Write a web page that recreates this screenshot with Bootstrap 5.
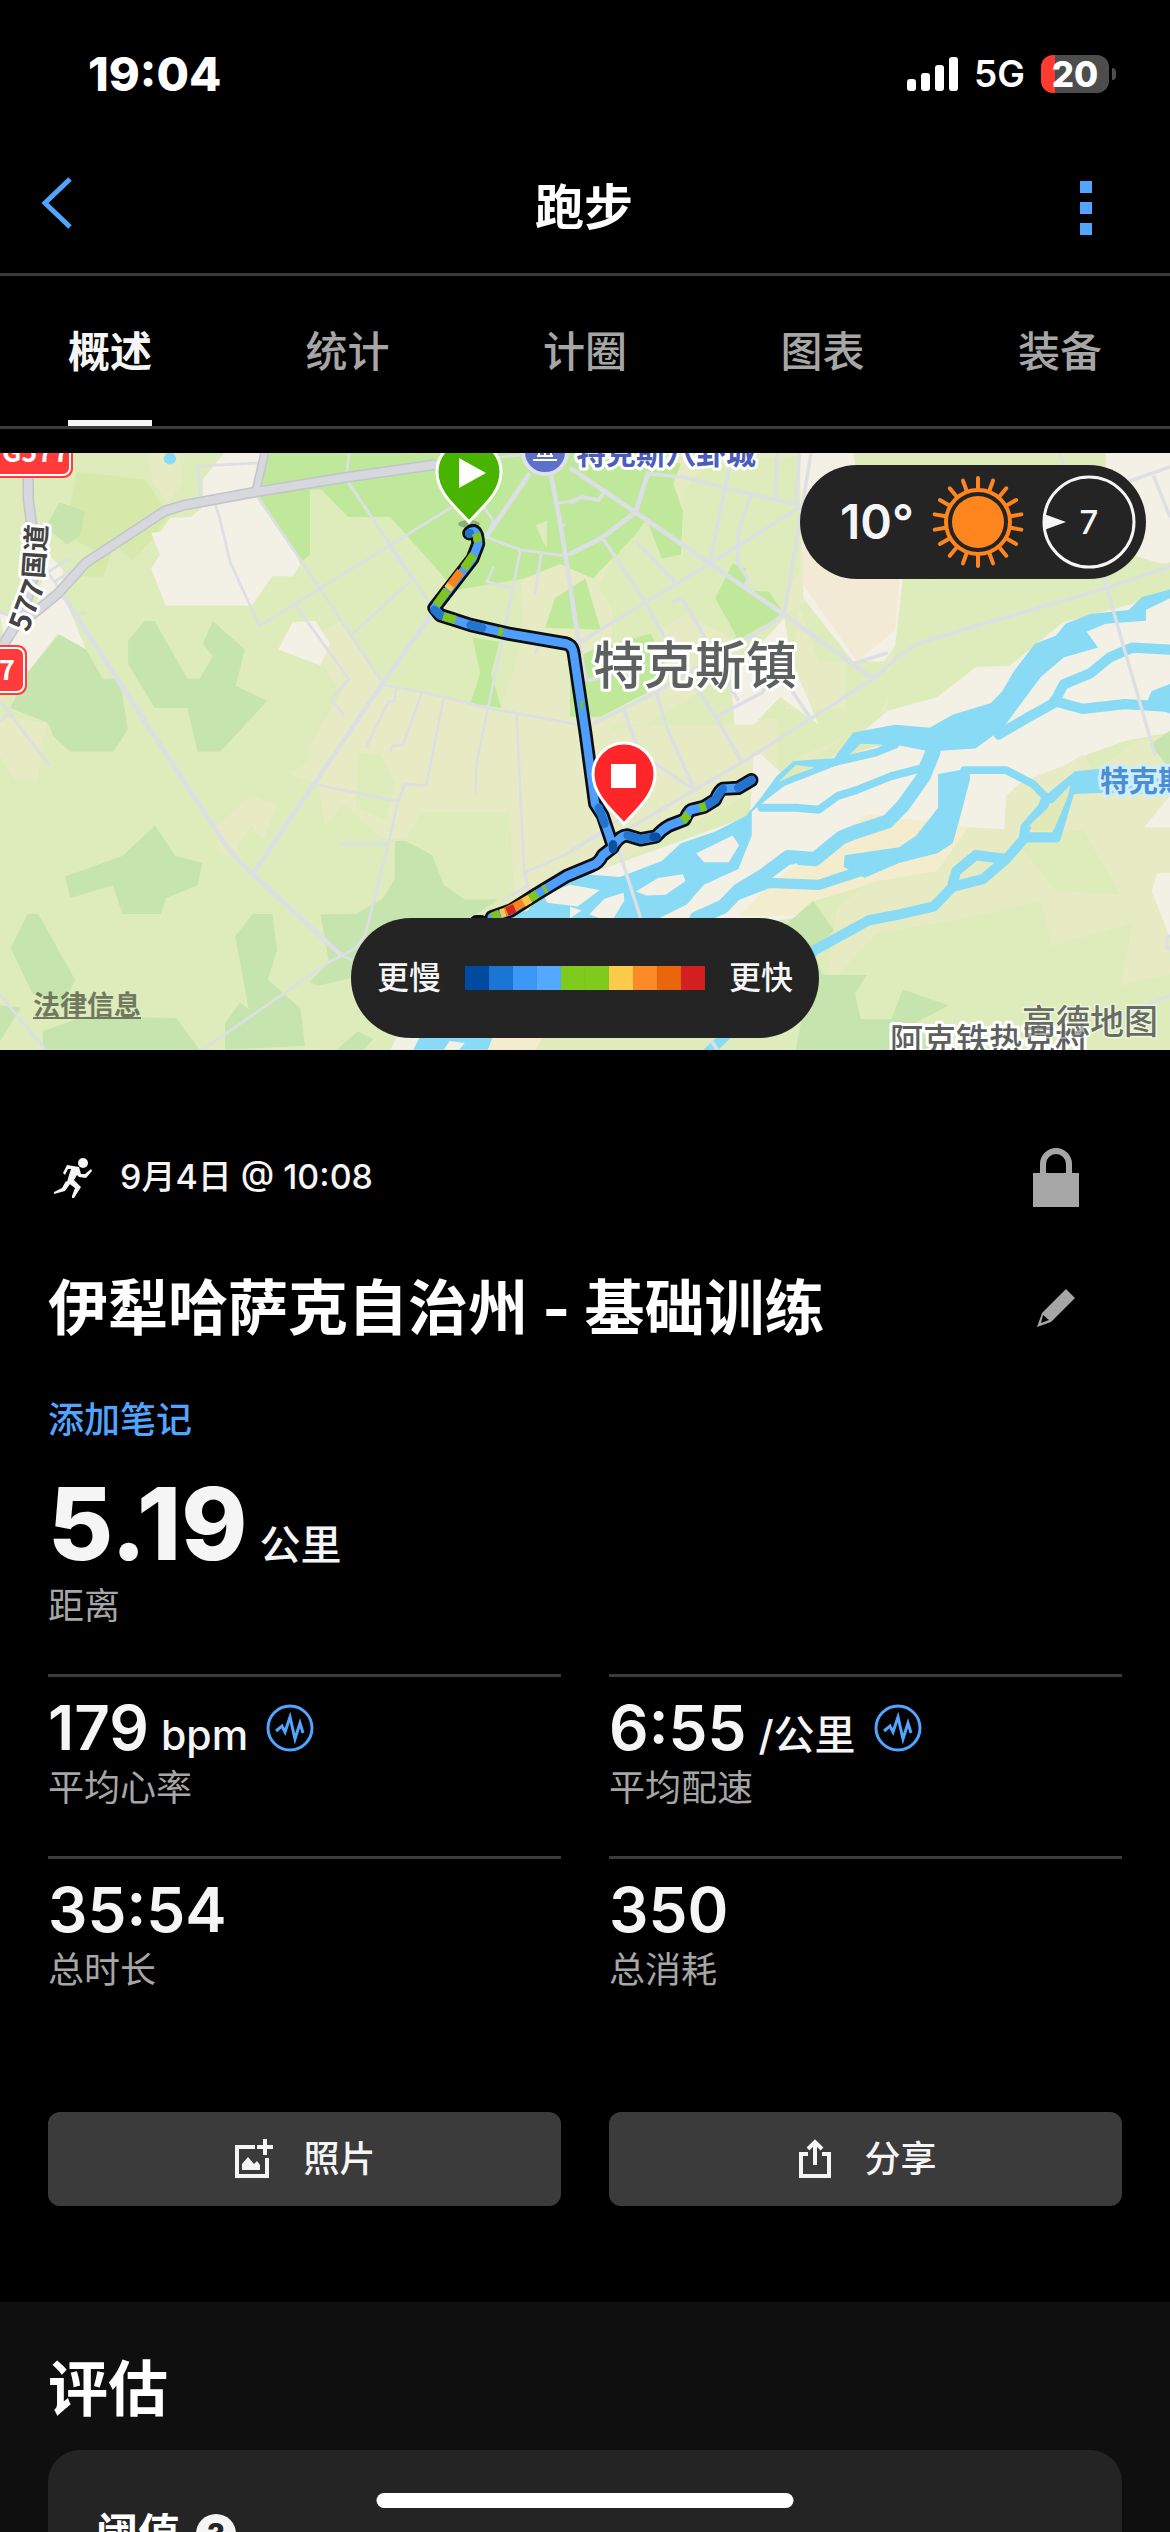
<!DOCTYPE html>
<html lang="zh-CN" data-bs-theme="dark">
<head>
<meta charset="utf-8">
<meta name="viewport" content="width=device-width, initial-scale=1">
<title>跑步</title>
<link href="https://cdn.jsdelivr.net/npm/bootstrap@5.3.0/dist/css/bootstrap.min.css" rel="stylesheet">
<style>
  :root { --ink: #f5f5f5; --dim: #a6a6a6; --accent: #52a5ff; --rule: #3b3b3b; --panel: #242424; }
  body { background: #000; color: var(--ink); font-family: Inter, "Noto Sans CJK SC", sans-serif; font-size: 36px; line-height: 48px; }
  svg { display: block; flex: none; }
  .screen { height: 100vh; }
  .statusbar { height: 142px; padding: 6px 54px 0 88px; color: #fff; }
  .clock { font-size: 47px; font-weight: 800; }
  .network { font-size: 37px; font-weight: 600; }
  .battery { width: 68px; height: 38px; border-radius: 12px; background: linear-gradient(to right, #ff3b30 14px, #4d4d4d 14px); font-size: 35px; line-height: 38px; font-weight: 800; }
  .nub { width: 4px; height: 12px; border-radius: 0 6px 6px 0; background: #4d4d4d; margin-left: 3px; }
  .titlebar { height: 134px; padding: 0 78px 0 40px; border-bottom: 3px solid var(--rule); }
  .titlebar h1 { font-size: 49px; line-height: 60px; font-weight: 700; }
  .plain { background: none; border: 0; padding: 0; color: var(--accent); }
  .back { width: 132px; padding-bottom: 8px; }
  .more { width: 96px; }
  .tabs { padding: 0 68px; height: 153px; border-bottom: 3px solid var(--rule); }
  .tabs a { font-size: 42px; line-height: 60px; color: var(--dim); text-decoration: none; padding-top: 46px; border-bottom: 6px solid transparent; font-weight: 500; }
  .tabs a.active { color: var(--ink); border-color: var(--ink); font-weight: 700; }
  .mapbox { margin-top: 24px; height: 597px; overflow: hidden; background: #deebba; }
  .mapbox > svg { width: 100%; height: 100%; }
  .mapbox text { font-family: "Noto Sans CJK SC", sans-serif; font-weight: 700; }
  .mapbox .town { font-weight: 500; }
  .pill { background: var(--panel); border-radius: 60px; }
  .weather { top: 12px; right: 24px; height: 114px; padding: 0 10px 0 40px; gap: 18px; }
  .temp { font-size: 48px; font-weight: 600; }
  .wind { font-size: 33px; font-weight: 500; width: 94px; height: 94px; }
  .legendbar { bottom: 12px; height: 120px; padding: 0 26px; gap: 24px; font-size: 32px; font-weight: 500; }
  .scale i { width: 24px; height: 24px; }
  .legal { left: 33px; bottom: 26px; font-size: 27px; line-height: 36px; font-weight: 700; color: #70795f; }
  .pad { padding-left: 48px; padding-right: 48px; }
  .when { padding-top: 96px; font-size: 34px; font-weight: 500; gap: 26px; }
  .name { font-size: 60px; line-height: 72px; font-weight: 700; }
  .name-row { margin-top: 64px; }
  .iconbox { width: 132px; }
  .note { margin-top: 52px; color: var(--accent); text-decoration: none; font-weight: 500; }
  .total { padding: 32px 0 44px; }
  .total .dim { margin-top: 10px; }
  .big { font-size: 100px; line-height: 96px; font-weight: 800; }
  .figure { font-size: 62px; line-height: 72px; font-weight: 600; }
  .unit { font-size: 41px; font-weight: 500; margin: 0 18px 0 12px; }
  .dim { color: var(--dim); }
  .stats { column-gap: 48px; display: grid; grid-template-columns: 1fr 1fr; }
  .stat { border-top: 3px solid var(--rule); height: 182px; padding-top: 15px; }
  .actions { margin-top: 74px; }
  .action { background: #3b3b3b; border: 0; border-radius: 12px; color: var(--ink); height: 94px; font-size: 36px; font-weight: 500; gap: 28px; }
  .action:hover { background: #4a4a4a; color: var(--ink); }
  .review { background: #0f0f0f; padding-top: 51px; margin-top: 96px; }
  .panelcard { background: var(--panel); border-radius: 32px 32px 0 0; margin-top: 25px; padding: 56px 48px 0; }
  .panelcard h3 { font-size: 42px; line-height: 56px; font-weight: 700; }
  .help { width: 40px; height: 40px; border-radius: 50%; background: var(--ink); color: var(--panel); font-size: 30px; line-height: 40px; font-weight: 800; }
  .homebar { bottom: 24px; width: 417px; height: 15px; border-radius: 8px; background: #fff; }
</style>
<script src="https://cdn.jsdelivr.net/npm/bootstrap@5.3.0/dist/js/bootstrap.bundle.min.js"></script>
</head>
<body>
<div class="screen d-flex flex-column overflow-hidden position-relative">

  <div class="statusbar d-flex align-items-center flex-shrink-0">
    <span class="clock me-auto">19:04</span>
    <svg width="51" height="34" fill="#fff" aria-hidden="true"><rect y="22" width="9" height="12" rx="3"/><rect x="14" y="16" width="9" height="18" rx="3"/><rect x="28" y="8" width="9" height="26" rx="3"/><rect x="42" width="9" height="34" rx="3"/></svg>
    <span class="network ms-3 me-3">5G</span>
    <span class="battery text-center">20</span><span class="nub"></span>
  </div>

  <header class="titlebar d-flex align-items-center justify-content-between flex-shrink-0">
    <button class="plain back" aria-label="返回"><svg width="34" height="54" fill="none" stroke="currentColor" stroke-width="5"><path d="M30 2 5 26 30 50"/></svg></button>
    <h1 class="m-0">跑步</h1>
    <button class="plain more d-flex justify-content-end" aria-label="更多"><svg width="12" height="54" fill="currentColor"><path d="M0 0h12v12H0zM0 21h12v12H0zM0 42h12v12H0z"/></svg></button>
  </header>

  <nav class="tabs d-flex justify-content-between flex-shrink-0">
    <a href="#" class="active" aria-current="page">概述</a>
    <a href="#">统计</a>
    <a href="#">计圈</a>
    <a href="#">图表</a>
    <a href="#">装备</a>
  </nav>

  <section class="mapbox position-relative flex-shrink-0">
    <svg viewBox="0 0 1170 597" preserveAspectRatio="xMidYMid slice" role="img" aria-label="路线地图">
      <!-- land cover, west half -->
      <g transform="translate(0,-13) scale(.38265,.39541)">
        <path fill="#e7ebc3" d="M810 500 840 560 890 640 810 770 810 810 755 845 830 870 850 975 900 920 1000 1010 1060 1010 1100 940 1330 940 1345 1160 1600 1160 1600 260 1190 380 1000 400zM655 900 725 920 690 1010 655 975 610 1050 575 1050 565 980zM0 700 125 715 110 770 100 862 40 862 0 800zM390 33 470 33 475 110 440 160 400 110z"/>
        <path fill="#deebba" d="M1150 330 1360 350 1370 500 1310 680 1100 640 1000 610 900 470 840 380 810 300 810 125 910 195 1020 195zM935 792 995 795 1032 870 1010 960 930 930z"/>
        <path fill="#d6e9ab" d="M200 80 380 100 440 190 400 250 345 305 300 260 270 345 200 345 250 280 170 240z"/>
        <path fill="#bfe89b" d="M700 33H1620V290L1500 300 1370 350 1190 380 1145 330 1020 195 910 195 840 125 810 125 810 290 780 315 675 145zM1450 400 1530 350 1570 480 1425 475zM1235 500 1305 510 1283 590 1310 678 1230 665 1255 590z"/>
        <path fill="#deebba" d="M1400 215 1440 200 1445 290 1420 260z"/>
        <path fill="#f3f0e5" d="M395 235 420 232 445 197 500 195 540 160 620 140 665 140 780 300 785 315 765 345 712 345 657 419 433 419 395 325 418 290zM530 150 530 100 585 33 690 33 670 130zM765 460 825 458 862 515 838 570 727 530zM0 440 90 440 110 350 120 280 165 330 165 390 225 530 150 490 75 585 20 560z"/>
        <path fill="#c6e4ad" d="M155 492 225 530 268 604 313 604 334 733 296 788 183 788 140 750 125 715 27 678 70 590zM378 458 404 458 490 604 522 604 556 547 530 515 556 458 640 530 616 622 698 660 576 788 516 788 490 678 405 678 335 567 335 508zM405 975 458 1052 529 1070 516 1126 434 1158 420 1199 320 1199 295 1126 184 1158 170 1104 320 1052zM72 1199 100 1199 196 1365 165 1430 85 1400 28 1285zM660 1199 712 1199 724 1290 700 1365 785 1437 797 1532 588 1542 588 1475 628 1422 650 1440 615 1255zM1032 1014 1060 1014 1130 1050 1160 1126 1215 1162 1300 1162 1230 1210 920 1360 830 1380 810 1370 860 1320 838 1200 930 1199 1000 1160 1032 1110zM170 1475 220 1458 460 1462 522 1542 112 1542 112 1495zM155 158 222 180 210 240 175 265 120 220zM0 1430 55 1435 0 1520zM935 1495 975 1515 950 1542 880 1542z"/>
        <path fill="#f3f0e5" d="M1040 1505H1300V1542H1020z"/>
        <path fill="#f3edcd" d="M1290 1505H1420L1400 1542H1280z"/>
        <path fill="#89daf5" d="M1100 1505H1290L1275 1542H1200L1215 1525 1175 1520 1160 1542H1080z"/>
        <ellipse cx="444" cy="47" rx="16" ry="15" fill="#89daf5"/>
      </g>
      <!-- land cover and river, east half -->
      <g transform="translate(570,-13) scale(.38265,.39541)">
        <path fill="#e7ebc3" d="M270 33H640V400L560 440 480 500 400 600 200 720 60 740 0 1040 100 1080 560 850 830 685 860 380 830 560 650 560 600 420 560 700 400 720 0 720 100 600 180 540 260 560 230 480 380 400 290 300 270 200z"/>
        <path fill="#deebba" d="M75 370 115 300 180 235 215 260 230 340 250 310 295 290 295 130 360 60 600 40 600 330 560 390 520 520 420 500 300 440 200 425 110 425zM540 860 600 800 800 720 830 640V560H720V680H540zM490 240H590V330L560 440 490 380z"/>
        <path fill="#bfe89b" d="M425 312 460 325 460 380 520 384 560 440 440 505 380 400zM60 530 210 490 250 560 200 640 80 700 0 700V560zM-60 33H200L290 60 270 110 295 180 290 290 240 300 200 200 170 240 60 350-60 300z"/>
        <path fill="#f3f0e5" d="M600 33H740L800 350 870 350 850 520 820 560 740 560 610 400zM1400 33H1568V320L1400 270zM420 600 560 450 580 560 650 720 550 650 480 720 430 720z"/>
        <path fill="#f2ead5" d="M610 170 860 350 850 480 750 560 605 360z"/>
        <path fill="#deebba" d="M870 370 1568 310V400L1290 460 1150 570 1060 575 960 650 830 685 830 600 860 520z"/>
        <path fill="#f3f0e5" d="M-150 1215 0 1110 100 1080 470 950 480 800 500 795 560 850 690 800 830 685 960 650 1060 575 1150 570 1290 460 1490 410 1568 400V740L1455 760 1340 800 1300 820 1160 880 1135 985 1040 980 960 1100 780 1120 640 1160 600 1205 300 1260-150 1260z"/>
        <path fill="#f3edcd" d="M640 1040 780 945 1050 980 1010 1090 780 1125 640 1165 590 1203H440L540 1110z"/>
        <path fill="#e7ebc3" d="M1135 985 1140 900 1180 865 1300 820 1340 795 1370 840 1480 760 1568 745V1542H1200L1130 1500 900 1542H640L700 1180 780 1120 960 1090 1040 980z"/>
        <path fill="#deebba" d="M700 1350 800 1250 1080 1200 1230 1165 1260 1280 1470 1220 1440 1380 1568 1350V1542H640zM1160 1010 1340 985 1440 1150 1270 1140z"/>
        <path fill="#c6e4ad" d="M635 1165 690 1240 640 1290 590 1542H940L910 1470 990 1430 870 1390 840 1465H760L745 1400 775 1353H660L640 1300 560 1230zM1568 735V830L1515 770z"/>
        <path fill="#f3f0e5" d="M1535 1095H1568V1260L1520 1140zM1500 980 1568 900V980z"/>
        <path fill="#89daf5" d="M1568 378 1495 397 1460 430 1360 440 1295 465 1270 495 1215 515 1160 585 1130 635 1100 665 1000 695 940 728 850 720 740 740 690 805 585 812 540 850 495 910 460 950 380 990 290 1020 240 1065 130 1105 0 1095-60 1130-110 1190-230 1225H200L305 1175 350 1125 440 1085 475 1000 475 940 520 905 560 875 700 822 760 780 840 768 940 788 1060 780 1130 730 1230 600 1290 550 1380 525 1350 485 1400 465 1505 457 1505 430 1568 400z"/>
        <path fill="#f3f0e5" d="M330 1045 425 1000 442 1025 415 1068 350 1068zM172 1142 230 1108 295 1098 302 1115 250 1150 200 1152zM80 1210 50 1200 90 1160 140 1145 142 1165 110 1215zM0 1180 30 1190 0 1210zM-70 1150 0 1125 78 1138 20 1180-60 1170z"/>
        <path fill="#e0e9b7" d="M545 865 590 822 640 828 580 850zM720 805 760 768 815 770 750 790z"/>
        <g fill="none" stroke="#89daf5" stroke-linejoin="round" stroke-linecap="round">
          <path stroke-width="26" d="M1568 530 1470 525 1410 550 1360 590 1290 618 1265 665 1200 700 1120 745M1265 660 1340 680 1450 668 1568 675M760 1090 650 1125 520 1120 440 1150M1245 905 1235 930 1190 980 1185 1010 1140 1060 1080 1110 1000 1130 950 1180 860 1200 780 1215 640 1290 360 1550M1305 890 1270 1005 1190 1005M1140 1060 1060 1050 1010 1090 1000 1120"/>
          <path stroke-width="20" d="M940 785 920 830 840 850 750 885 700 900 650 935 590 930 500 930M1030 835 1140 835 1210 870 1245 905M690 815 800 790 850 770"/>
          <path stroke-width="36" d="M950 790 925 850 870 925 830 965 750 990 710 1005 640 1060 570 1055 500 1105 440 1140 400 1180 330 1210"/>
        </g>
        <path fill="#f3f0e5" d="M570 1085 590 1070 600 1078z"/>
        <path fill="#89daf5" d="M962 845 1045 830 1045 860 1015 970 1000 1020 960 1045 860 1070 770 1107 715 1080 718 1050 860 1030 905 1000 962 930zM1235 905 1320 838 1380 832 1568 860V898L1400 892 1320 895 1255 920zM1568 617 1520 635 1505 670 1568 692z"/>
        <path fill="#e0e9b7" d="M1255 925 1308 872 1300 905 1265 985 1215 990 1200 975z"/>
      </g>
      <!-- local streets -->
      <g fill="none" stroke="#dcdfe4" stroke-linejoin="round">
        <g transform="translate(0,-13) scale(.38265,.39541)" stroke-width="7">
          <path stroke-width="12" d="M160 385 310 610 580 1010Q605 1050 660 1098L890 1302M660 1098 1000 615 1125 445"/>
          <path d="M525 150 517 66 680 58M560 158 572 190 602 310 678 470 770 415 1180 170M675 145 835 375 1000 615M905 100 1125 415M905 95 912 33M770 415 912 605 870 650V662L900 697M920 492 1078 352 1015 265M1000 618 1160 650 1275 678 1400 700 1540 725M1360 278 1310 520 1275 678 1245 820 1242 893M1350 692 1370 1095 1385 1150M1036 625 1030 662H1015L957 778M1102 640 1052 772 1025 773 1020 787M1160 650 1114 875 1058 870 1040 915 1015 1022 955 1250 930 1285 860 1320 530 1542M830 872 1040 914M888 1022H1015M890 1302 920 1315M0 660 130 825M25 690 0 712M0 1403 118 1542M205 440 225 436M190 302 173 303 125 335 165 390M195 325 140 360M0 435 25 445M1290 320 1273 358 1340 375M1415 285 1398 390M1370 1095 1485 1045 1650 940M1400 540 1410 512M1310 1165 1385 1125M1380 85 1270 245M1265 170 1290 205 1270 245 1360 278 1478 293 1568 250M1140 60 1360 38"/>
          <path stroke-width="12" d="M1440 90 1462 200 1478 293 1512 510 1530 610M1270 245 1385 85"/>
          <path d="M1455 160 1490 155 1525 143 1568 152M1465 215H1478"/>
        </g>
        <g transform="translate(570,-13) scale(.38265,.39541)" stroke-width="7">
          <path stroke-width="12" d="M0 70 170 182 365 312 560 442 793 604M205 80 172 182 82 248 0 288"/>
          <path stroke-width="9" d="M60 718 230 635 500 480 560 440M25 512 370 310 600 170M140 990 450 815 793 604 860 545 915 512 1410 372 1568 320M170 182 205 85 300 95 400 120 600 165M415 75 365 312M542 33 537 150M600 33 590 160M630 33 560 442M472 138 440 230 438 310 465 350 458 370M85 248 190 400 260 520M172 255 275 360M265 410 290 402 305 420 370 530M0 1040 100 985M45 608 120 590 200 570M140 680 180 790 325 885M225 635 250 720 325 885M320 610 380 700 450 815M380 700 500 640 560 570M410 610 440 660M570 620 630 705M470 495 520 540M735 567 830 538M0 160 30 145 75 152 95 125M125 1030 185 1210M1280 33 1390 330 1440 500 1530 800M1568 68 1460 105M1525 90 1568 195M370 1520 385 1542M1568 1405 1400 1470M1568 1252 1560 1260V1285H1568"/>
        </g>
      </g>
      <!-- highways -->
      <g transform="translate(0,-13) scale(.38265,.39541)" fill="none" stroke-linejoin="round">
        <g stroke="#c2c5ca" stroke-width="30"><path d="M73 33 74 150 85 230 85 350 60 440 0 530"/><path d="M80 445 150 390 225 310 430 180 480 165 665 132 900 95 1140 62" stroke-width="28"/><path d="M692 33 668 132" stroke-width="24"/></g>
        <g stroke="#d6d8de" stroke-width="22"><path d="M73 33 74 150 85 230 85 350 60 440 0 530"/><path d="M80 445 150 390 225 310 430 180 480 165 665 132 900 95 1140 62" stroke-width="20"/><path d="M692 33 668 132" stroke-width="16"/></g>
      </g>
      <!-- place names -->
      <g stroke="#fff" stroke-width="6" stroke-linejoin="round" paint-order="stroke">
        <text class="town" x="593" y="231" font-size="51" fill="#5c605e">特克斯镇</text>
        <text x="576" y="11" font-size="30" fill="#4a5dbd">特克斯八卦城</text>
        <text x="1100" y="339" font-size="29" fill="#4a8fd4" stroke="#cdeefa">特克斯河</text>
        <text class="town" x="890" y="599" font-size="33" fill="#5c605e">阿克铁热克村</text>
        <text transform="translate(43,126) rotate(-86)" font-size="27" fill="#444">国道</text>
        <text transform="translate(28,180) rotate(-70)" font-size="29" fill="#444">577</text>
      </g>
      <text class="town" x="1022" y="581" font-size="34" fill="#555a52" fill-opacity=".9" stroke="#fff" stroke-opacity=".5" stroke-width="3" paint-order="stroke">高德地图</text>
      <!-- road shields -->
      <g fill="#ff3b3b" stroke="#fff" stroke-width="2">
        <rect x="-12" y="-20" width="84" height="44" rx="8" stroke="#ff3b3b"/><rect x="-12" y="-20" width="82" height="42" rx="7"/>
        <rect x="-50" y="193" width="76" height="48" rx="8" stroke="#ff3b3b"/><rect x="-50" y="195" width="74" height="44" rx="7"/>
      </g>
      <g fill="#fff" font-size="27"><text x="2" y="9">G577</text><text x="-1" y="227">7</text></g>
      <!-- sight marker -->
      <circle cx="545" cy="-1" r="22" fill="#5c6fcb" stroke="#dfe0ee" stroke-width="4"/>
      <path d="M533 7h24M537 3h16M539 -2v5M545 -2v5M551 -2v5" stroke="#fff" stroke-width="2"/>
      <!-- recorded track -->
      <g transform="translate(0,-13) scale(.38265,.39541)" fill="none" stroke-linejoin="round" stroke-linecap="round">
        <g stroke="#0b0f14" stroke-width="36">
          <path id="trk" d="M1226 236Q1240 222 1247 242L1250 262 1235 300 1135 425 1150 443 1230 468 1330 490 1480 515Q1498 520 1500 545L1530 740 1555 920 1575 950 1602 1028Q1620 1000 1639 1000L1674 1010 1714 1003Q1730 985 1749 975L1789 960Q1800 935 1809 935L1839 928 1869 910Q1880 885 1889 882L1929 880 1964 860M1602 1030 1575 1050Q1565 1070 1549 1075L1480 1103 1400 1150 1335 1190 1285 1207"/>
          <path d="M1245 1219H1258"/>
        </g>
        <g stroke="#4d9ffb" stroke-width="22">
          <use href="#trk"/>
          <path stroke="#2374cf" d="M1602 1022 1602 1030M1640 1000 1674 1010 1714 1003M1839 928 1869 910 1889 882M1929 880 1964 860M1135 430 1150 443 1170 450M1226 236H1228M1565 930 1580 970M1230 468 1260 475"/>
          <path stroke="#0b4f9e" d="M1602 1024V1034M1708 1004H1716"/>
          <path stroke="#7fc41f" stroke-linecap="butt" d="M1244 236 1250 258M1238 290 1212 325M1168 380 1140 418M1158 446 1190 455M1303 484 1314 487M1783 963 1800 948M1828 931 1845 926M1428 1134 1420 1138M1404 1148 1385 1160M1305 1198 1285 1207M1517 670H1523"/>
          <path stroke="#f9831c" stroke-linecap="butt" d="M1204 333 1176 369M1385 1160 1320 1194"/>
          <path stroke="#fbc748" stroke-linecap="butt" d="M1178 367 1170 377M1385 1160 1368 1170M1320 1194 1308 1198"/>
          <path stroke="#d6231f" stroke-linecap="butt" d="M1345 1184 1325 1193"/>
        </g>
      </g>
      <!-- start and finish -->
      <g stroke="#fff" stroke-width="3">
        <ellipse cx="469" cy="71" rx="11" ry="4" fill="#000" fill-opacity=".25" stroke="none"/>
        <path fill="#48b400" d="M469 69C456 54 437 40 437 19A32 32 0 0 1 501 19C501 40 482 54 469 69z"/>
        <path fill="#fff" stroke="none" d="M459 5 486 20 459 35z"/>
        <path fill="#ff2629" d="M624 371C611 356 593 342 593 321A31 31 0 0 1 655 321C655 342 637 356 624 371z"/>
        <path fill="#fff" stroke="none" d="M611 311h25v24h-25z"/>
      </g>
    </svg>

    <div class="pill weather position-absolute d-flex align-items-center">
      <span class="temp">10°</span>
      <svg width="92" height="94" viewBox="-46 -47 92 94" fill="none" stroke="#ff851f" stroke-width="4" stroke-linecap="round">
        <circle r="26" fill="#ff851f" stroke="none"/><circle r="32"/>
        <g id="ray4"><g id="ray"><path d="M0 -33V-44"/><path d="M0 -33V-44" transform="rotate(20)"/><path d="M0 -33V-44" transform="rotate(40)"/></g><use href="#ray" transform="rotate(60)"/><use href="#ray" transform="rotate(120)"/></g>
        <use href="#ray4" transform="rotate(180)"/>
      </svg>
      <span class="wind position-relative d-flex align-items-center justify-content-center">
        <svg class="position-absolute top-0 start-0" width="94" height="94"><circle cx="47" cy="47" r="45" fill="none" stroke="#f5f5f5" stroke-width="3"/><path fill="#f5f5f5" d="M2 39 24 47 2 55z"/></svg>7
      </span>
    </div>

    <div class="pill legendbar position-absolute start-50 translate-middle-x d-flex align-items-center text-nowrap">
      <span>更慢</span>
      <span class="scale d-flex"><i style="background:#004a9f"></i><i style="background:#1976d2"></i><i style="background:#3d97f5"></i><i style="background:#55a8ff"></i><i style="background:#80ca1e"></i><i style="background:#80ca1e"></i><i style="background:#fccb4c"></i><i style="background:#fa8b26"></i><i style="background:#ea660d"></i><i style="background:#d32021"></i></span>
      <span>更快</span>
    </div>
    <a href="#" class="legal position-absolute">法律信息</a>
  </section>

  <main class="pad flex-shrink-0">
    <div class="when d-flex align-items-center">
      <svg width="46" height="44" viewBox="0 0 46 44" fill="#f5f5f5"><circle cx="35" cy="8" r="5"/><path d="M19 10 31 12 33 19 37 19 43 14 44 16 38 23 31 22 29 20 26 25 33 32 26 43H24V41L27 33 19 27 21 20 23 14H20L17 20 15 18zM18 26 22 29 17 36 6 39V37L14 33z"/></svg>
      <span class="me-auto">9月4日 @ 10:08</span>
      <span class="iconbox"><svg class="mx-auto" width="48" height="62" aria-label="私密"><path d="M11 28V18A13 13 0 0 1 37 18V28" fill="none" stroke="#a6a6a6" stroke-width="6"/><path fill="#a6a6a6" d="M1 27h46v34H1z"/></svg></span>
    </div>
    <div class="name-row d-flex align-items-center justify-content-between">
      <h2 class="name m-0">伊犁哈萨克自治州 - 基础训练</h2>
      <button class="plain iconbox" aria-label="编辑"><svg class="mx-auto" width="40" height="40" fill="#a6a6a6"><path d="M30 1 39 10 15 34 1 39 6 25zM7 27 5 35 13 32z" fill-rule="evenodd"/></svg></button>
    </div>
    <a href="#" class="note d-table">添加笔记</a>
    <div class="total">
      <div class="d-flex align-items-baseline"><span class="big">5.19</span><span class="unit">公里</span></div>
      <div class="dim">距离</div>
    </div>
    <div class="stats">
      <div class="stat">
        <div class="d-flex align-items-baseline"><span class="figure">179</span><span class="unit">bpm</span><svg class="align-self-center" width="48" height="48" viewBox="0 0 48 48" fill="none" stroke="#52a5ff"><circle cx="24" cy="24" r="22" stroke-width="3"/><path stroke-width="3" d="M10 27 16 22 19 28 24 13 29 35 34 19 37 29"/></svg></div>
        <div class="dim">平均心率</div>
      </div>
      <div class="stat">
        <div class="d-flex align-items-baseline"><span class="figure">6:55</span><span class="unit">/公里</span><svg class="align-self-center" width="48" height="48" viewBox="0 0 48 48" fill="none" stroke="#52a5ff"><circle cx="24" cy="24" r="22" stroke-width="3"/><path stroke-width="3" d="M10 27 16 22 19 28 24 13 29 35 34 19 37 29"/></svg></div>
        <div class="dim">平均配速</div>
      </div>
      <div class="stat"><div class="figure">35:54</div><div class="dim">总时长</div></div>
      <div class="stat"><div class="figure">350</div><div class="dim">总消耗</div></div>
    </div>
    <div class="stats actions">
      <button class="btn action d-flex align-items-center justify-content-center"><svg width="42" height="42" fill="none" stroke="#f5f5f5" stroke-width="4"><path d="M22 9H4V38H34V20M32 1V17M24 9H40"/><path d="M9 32V26L15 19 21 26 24 23 27 27V32z" fill="#f5f5f5" stroke="none"/></svg>照片</button>
      <button class="btn action d-flex align-items-center justify-content-center"><svg width="42" height="42" fill="none" stroke="#f5f5f5" stroke-width="4"><path d="M14 16H7V38H35V16H28M21 27V5M14 11 21 4 28 11"/></svg>分享</button>
    </div>
  </main>

  <section class="review pad flex-grow-1 d-flex flex-column">
    <h2 class="name m-0">评估</h2>
    <div class="panelcard flex-grow-1">
      <div class="d-flex align-items-center gap-3"><h3 class="m-0">阈值</h3><button class="plain help" aria-label="说明">?</button></div>
    </div>
  </section>

  <div class="homebar position-absolute start-50 translate-middle-x"></div>
</div>
</body>
</html>
